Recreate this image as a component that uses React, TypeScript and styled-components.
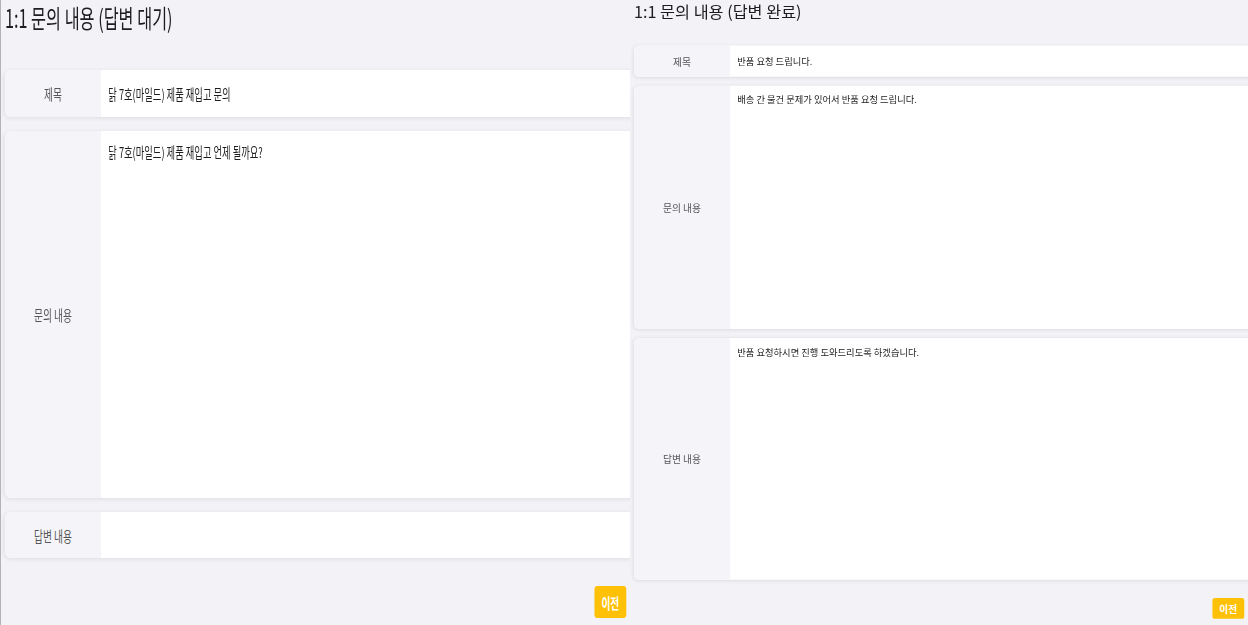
import React from "react";
import styled, { createGlobalStyle } from "styled-components";

const Global = createGlobalStyle`
  html, body {
    margin: 0;
    padding: 0;
    background: #f2f2f7;
    overflow: hidden;
  }
  body {
    font-family: "Noto Sans CJK KR", "Noto Sans", sans-serif;
    color: #1d1d1f;
  }
  * { box-sizing: border-box; }
`;

const Screen = styled.div`
  display: flex;
  width: 1248px;
  height: 625px;
`;

const Frame = styled.div<{ $w: number; $edge?: boolean }>`
  flex: 0 0 ${(p) => p.$w}px;
  width: ${(p) => p.$w}px;
  height: 625px;
  overflow: hidden;
  background: #f2f2f7;
  border-left: ${(p) => (p.$edge ? "1px solid #b4b4b8" : "none")};
`;

const Page = styled.div<{ $w: number; $h: number; $sx: number; $sy: number }>`
  width: ${(p) => p.$w}px;
  height: ${(p) => p.$h}px;
  transform: scale(${(p) => p.$sx}, ${(p) => p.$sy});
  transform-origin: 0 0;
  display: flex;
  flex-direction: column;
  padding-left: 6px;
`;

const Title = styled.h1`
  align-self: flex-start;
  margin: 1px 0 37px;
  font-size: 25px;
  line-height: 32px;
  font-weight: 400;
  color: #1d1d1f;
  white-space: nowrap;
`;

const Rows = styled.div`
  display: flex;
  flex-direction: column;
  gap: 14px;
  margin-right: -30px;
`;

const Row = styled.div<{ $h: number }>`
  display: flex;
  height: ${(p) => p.$h}px;
  background: #fff;
  border-radius: 8px;
  overflow: hidden;
  box-shadow: 0 1px 6px rgba(0, 0, 0, 0.09);
`;

const Label = styled.div`
  flex: 0 0 148px;
  display: flex;
  align-items: center;
  justify-content: center;
  background: #f5f5f9;
  font-size: 15px;
  color: #555558;
`;

const Value = styled.div<{ $center?: boolean }>`
  flex: 1;
  display: flex;
  align-items: ${(p) => (p.$center ? "center" : "flex-start")};
  padding: 10px 11px;
  font-size: 14.3px;
  line-height: 22px;
  color: #1d1d1f;
  white-space: nowrap;
`;

const Actions = styled.div`
  display: flex;
  justify-content: flex-end;
  margin-top: 28px;
  padding-right: 6px;
`;

const Button = styled.button`
  width: 49px;
  height: 32px;
  border: none;
  border-radius: 4px;
  background: #ffc107;
  color: #fff;
  font-family: inherit;
  font-size: 15px;
  font-weight: 700;
  padding: 0;
`;

type Item = { label: string; text: string; h: number };

function InquiryPage({
  title,
  items,
  w,
  h,
  sx,
  sy,
}: {
  title: string;
  items: Item[];
  w: number;
  h: number;
  sx: number;
  sy: number;
}) {
  return (
    <Page $w={w} $h={h} $sx={sx} $sy={sy}>
      <Title>{title}</Title>
      <Rows>
        {items.map((it, i) => (
          <Row key={i} $h={it.h}>
            <Label>{it.label}</Label>
            <Value $center={i === 0}>{it.text}</Value>
          </Row>
        ))}
      </Rows>
      <Actions>
        <Button>이전</Button>
      </Actions>
    </Page>
  );
}

export default function App() {
  return (
    <Screen>
      <Global />
      <Frame $w={630} $edge>
        <InquiryPage
          title="1:1 문의 내용 (답변 대기)"
          w={968}
          h={625}
          sx={0.65}
          sy={1}
          items={[
            { label: "제목", text: "닭 7호(마일드) 제품 재입고 문의", h: 47 },
            { label: "문의 내용", text: "닭 7호(마일드) 제품 재입고 언제 될까요?", h: 367 },
            { label: "답변 내용", text: "", h: 46 },
          ]}
        />
      </Frame>
      <Frame $w={618}>
        <InquiryPage
          title="1:1 문의 내용 (답변 완료)"
          w={951}
          h={962}
          sx={0.65}
          sy={0.65}
          items={[
            { label: "제목", text: "반품 요청 드립니다.", h: 48 },
            { label: "문의 내용", text: "배송 간 물건 문제가 있어서 반품 요청 드립니다.", h: 374 },
            { label: "답변 내용", text: "반품 요청하시면 진행 도와드리도록 하겠습니다.", h: 372 },
          ]}
        />
      </Frame>
    </Screen>
  );
}
